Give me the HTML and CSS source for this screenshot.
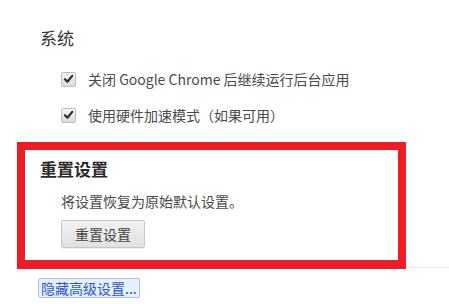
FILE: index.html
```html
<!DOCTYPE html>
<html lang="zh">
<head>
<meta charset="utf-8">
<link rel="stylesheet" href="styles.css">
</head>
<body>
<div class="page">
  <h3 class="sys-title">系统</h3>
  <div class="options">
    <label class="opt"><span class="cb"><svg viewBox="0 0 14 14" width="14" height="14"><path d="M3.2 7.2 L5.8 9.9 L11 3.6" fill="none" stroke="#2e2e2e" stroke-width="2.4" stroke-linecap="round" stroke-linejoin="round"/></svg></span><span>关闭 Google Chrome 后继续运行后台应用</span></label>
    <label class="opt"><span class="cb"><svg viewBox="0 0 14 14" width="14" height="14"><path d="M3.2 7.2 L5.8 9.9 L11 3.6" fill="none" stroke="#2e2e2e" stroke-width="2.4" stroke-linecap="round" stroke-linejoin="round"/></svg></span><span>使用硬件加速模式（如果可用）</span></label>
  </div>
  <div class="reset-row">
    <section class="reset-box">
      <h3 class="reset-title">重置设置</h3>
      <p class="reset-desc">将设置恢复为原始默认设置。</p>
      <button class="reset-btn">重置设置</button>
    </section>
    <div class="rule"></div>
  </div>
  <a class="adv-link" href="#">隐藏高级设置...</a>
</div>
</body>
</html>
```
FILE: styles.css
```css
html, body {
  margin: 0;
  padding: 0;
  background: #fff;
}
body {
  font-family: "Noto Sans CJK SC", "Noto Sans", "Liberation Sans", sans-serif;
  color: #3a3a3a;
  width: 449px;
  height: 304px;
  overflow: hidden;
}
.page {
  padding-top: 27px;
}
.sys-title {
  margin: 0 0 0 40px;
  font-size: 17px;
  font-weight: normal;
  line-height: 22px;
  color: #333;
}
.options {
  margin: 12px 0 0 61px;
  display: flex;
  flex-direction: column;
}
.opt {
  display: flex;
  align-items: center;
  gap: 12px;
  height: 36px;
  font-size: 14px;
  color: #4a4a4a;
}
.cb {
  width: 13px;
  height: 13px;
  border: 1px solid #bdbdbd;
  border-radius: 2px;
  background: linear-gradient(#f6f6f6, #dcdcdc);
  display: flex;
  align-items: center;
  justify-content: center;
  flex: none;
}
.cb svg { display: block; }
.reset-row {
  margin-top: 9px;
  display: flex;
  align-items: flex-end;
}
.reset-box {
  box-sizing: border-box;
  margin-left: 17px;
  width: 389px;
  border: 8px solid #ee1c25;
  border-bottom-width: 9px;
  padding: 8px 0 12px 15px;
}
.rule {
  flex: 1;
  border-bottom: 1px solid #ececec;
  margin-bottom: 1px;
}
.reset-title {
  margin: 0;
  font-size: 17px;
  line-height: 22px;
  font-weight: bold;
  color: #2a2a2a;
}
.reset-desc {
  margin: 11px 0 0 21px;
  font-size: 14px;
  line-height: 20px;
  color: #4a4a4a;
}
.reset-btn {
  display: block;
  margin: 9px 0 0 21px;
  width: 84px;
  height: 28px;
  padding: 0;
  font-family: inherit;
  font-size: 14px;
  color: #444;
  border: 1px solid #c6c6c6;
  border-radius: 2px;
  background: linear-gradient(#f2f2f2, #e0e0e0);
  box-shadow: 0 1px 0 rgba(0,0,0,0.06);
}
.adv-link {
  display: inline-block;
  margin: 9px 0 0 38px;
  padding: 0 2px;
  font-size: 14px;
  line-height: 18px;
  color: #2a57c8;
  text-decoration: none;
  background: #e9f0fd;
  border: 1px solid #a6c1f0;
  border-radius: 2px;
}
```
